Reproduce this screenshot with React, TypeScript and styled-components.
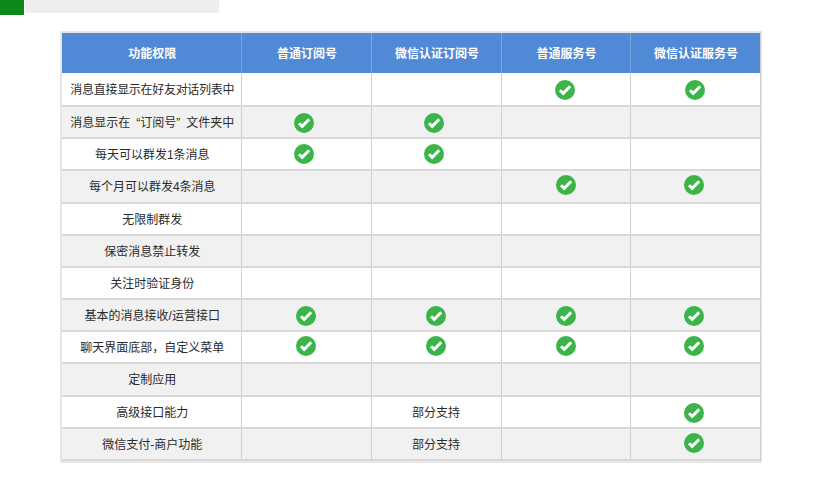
import styled, { createGlobalStyle } from 'styled-components';

const GlobalStyle = createGlobalStyle`
  html, body {
    margin: 0;
    padding: 0;
    background: #fff;
    font-family: "Liberation Sans", "Noto Sans CJK SC", sans-serif;
  }
`;

const Page = styled.div`
  width: 820px;
  height: 480px;
  overflow: hidden;
`;

const TopBar = styled.div`
  display: flex;
  align-items: flex-start;
  gap: 1px;
  height: 31px;
`;

const GreenTab = styled.div`
  width: 24px;
  height: 15px;
  background: #0c8918;
`;

const GreyTitle = styled.div`
  width: 194px;
  height: 13px;
  background: #eeeeee;
`;

const TableWrap = styled.div`
  width: 702px;
  margin-left: 60px;
  border: 2px solid #e6e6e6;
  box-sizing: border-box;
`;

const Table = styled.table`
  width: 698px;
  table-layout: fixed;
  border-collapse: collapse;
  font-size: 12px;
  color: #2b2b2b;
`;

const HeadCell = styled.th`
  height: 40px;
  padding: 0 0 2px 2px;
  box-sizing: border-box;
  background: #5089d6;
  color: #fff;
  font-weight: 700;
  text-align: center;
  border-right: 1px solid #7ba6e0;
  &:last-child {
    border-right: 1px solid #cfcfcf;
  }
`;

const Row = styled.tr<{ $shade: boolean; $height: number }>`
  height: ${p => p.$height}px;
  background: ${p => (p.$shade ? '#f1f1f1' : '#fff')};
`;

const Cell = styled.td`
  padding: 0 0 2px;
  text-align: center;
  vertical-align: middle;
  border-right: 1px solid #cfcfcf;
  border-bottom: 2px solid #d8d8d8;
  white-space: nowrap;
`;

const LabelCell = styled(Cell)`
  padding-left: 2px;
`;

const TightLabel = styled.span`
  letter-spacing: -0.3px;
`;

const Quote = styled.span<{ $side: 'open' | 'close' }>`
  margin-left: ${p => (p.$side === 'open' ? '6px' : '0')};
  margin-right: ${p => (p.$side === 'close' ? '6px' : '0')};
`;

const CheckWrap = styled.span<{ $dx: number; $dy: number }>`
  display: inline-block;
  width: 20px;
  height: 20px;
  vertical-align: middle;
  transform: translate(${p => p.$dx}px, ${p => p.$dy}px);
`;

const CheckSvg = styled.svg`
  display: block;
`;

function Check({ dx, dy }: { dx: number; dy: number }) {
  return (
    <CheckWrap $dx={dx} $dy={dy}>
      <CheckSvg width="20" height="20" viewBox="0 0 20 20">
        <circle cx="10" cy="10" r="10" fill="#3bb54a" />
        <path d="M5 10.2l3.2 3.2 7-7.2" fill="none" stroke="#fff" strokeWidth="3" />
      </CheckSvg>
    </CheckWrap>
  );
}

const columns = ['功能权限', '普通订阅号', '微信认证订阅号', '普通服务号', '微信认证服务号'];
const widths = [179, 130, 130, 129, 130];

type Mark = number | string | null;

const rows: { label: React.ReactNode; height: number; dy: number; marks: Mark[] }[] = [
  { label: <TightLabel>消息直接显示在好友对话列表中</TightLabel>, height: 33, dy: 2, marks: [null, null, -1, 0] },
  {
    label: (
      <>
        消息显示在<Quote $side="open">“</Quote>订阅号<Quote $side="close">”</Quote>文件夹中
      </>
    ),
    height: 32,
    dy: 2,
    marks: [-2, -2, null, null],
  },
  { label: '每天可以群发1条消息', height: 32, dy: 1, marks: [-2, -2, null, null] },
  { label: '每个月可以群发4条消息', height: 33, dy: -1, marks: [null, null, 0, -1] },
  { label: '无限制群发', height: 32, dy: 0, marks: [null, null, null, null] },
  { label: '保密消息禁止转发', height: 32, dy: 0, marks: [null, null, null, null] },
  { label: '关注时验证身份', height: 32, dy: 0, marks: [null, null, null, null] },
  { label: '基本的消息接收/运营接口', height: 32, dy: 2, marks: [0, 0, 0, -1] },
  { label: '聊天界面底部，自定义菜单', height: 32, dy: 0, marks: [0, 0, 0, -1] },
  { label: '定制应用', height: 33, dy: 0, marks: [null, null, null, null] },
  { label: '高级接口能力', height: 32, dy: 2, marks: [null, '部分支持', null, -1] },
  { label: '微信支付-商户功能', height: 32, dy: 0, marks: [null, '部分支持', null, -1] },
];

export default function App() {
  return (
    <Page>
      <GlobalStyle />
      <TopBar>
        <GreenTab />
        <GreyTitle />
      </TopBar>
      <TableWrap>
        <Table>
          <colgroup>
            {widths.map((w, i) => (
              <col key={i} width={w} />
            ))}
          </colgroup>
          <thead>
            <tr>
              {columns.map(c => (
                <HeadCell key={c}>{c}</HeadCell>
              ))}
            </tr>
          </thead>
          <tbody>
            {rows.map((row, i) => (
              <Row key={i} $shade={i % 2 === 1} $height={row.height}>
                <LabelCell>{row.label}</LabelCell>
                {row.marks.map((m, j) => (
                  <Cell key={j}>{typeof m === 'number' ? <Check dx={m} dy={row.dy} /> : m}</Cell>
                ))}
              </Row>
            ))}
          </tbody>
        </Table>
      </TableWrap>
    </Page>
  );
}
